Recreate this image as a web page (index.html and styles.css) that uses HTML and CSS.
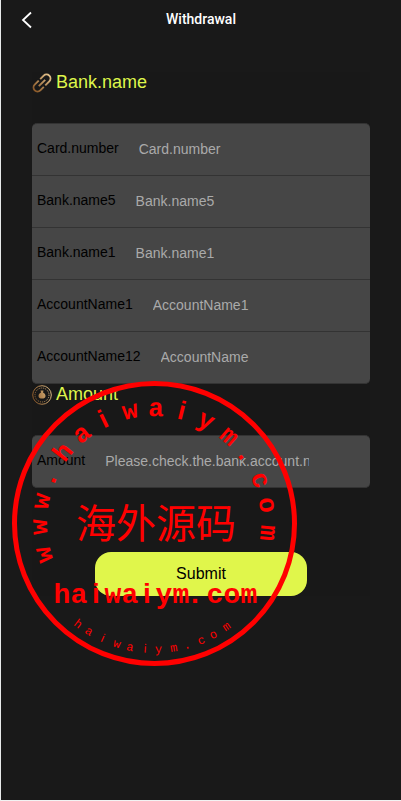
FILE: index.html
```html
<!DOCTYPE html>
<html lang="en">
<head>
<meta charset="utf-8">
<meta name="viewport" content="width=device-width, initial-scale=1">
<title>Withdrawal</title>
<link rel="stylesheet" href="styles.css">
</head>
<body>
<div class="page">
  <header class="bar">
    <button class="back" type="button" aria-label="Back">
      <svg width="12" height="18" viewBox="0 0 12 18"><path d="M10 1.500 2 9l8 7.500" fill="none" stroke="#fff" stroke-width="1.800"/></svg>
    </button>
    <h1 class="bar-title">Withdrawal</h1>
  </header>
  <form class="form">
    <h2 class="heading">
      <svg width="20" height="20" viewBox="0 0 20 20" aria-hidden="true">
        <defs><linearGradient id="copper" x1="0" y1="20" x2="20" y2="0" gradientUnits="userSpaceOnUse"><stop offset="0" stop-color="#7c4717"/><stop offset="1" stop-color="#efd09a"/></linearGradient></defs>
        <g fill="none" stroke="url(#copper)" stroke-width="1.900">
          <path d="M8.200 6.200 11.700 2.700a3.900 3.900 0 0 1 5.600 5.600L13.300 12.300"/>
          <path d="M11.800 13.800 8.300 17.300a3.900 3.900 0 0 1-5.600-5.600L6.700 7.700"/>
          <path d="M6.800 13.200 13.200 6.800"/>
        </g>
      </svg>
      <span>Bank.name</span>
    </h2>
    <div class="group">
      <div class="row"><label for="card">Card.number</label><input id="card" type="text" placeholder="Card.number"></div>
      <div class="row"><label for="bank5">Bank.name5</label><input id="bank5" type="text" placeholder="Bank.name5"></div>
      <div class="row"><label for="bank1">Bank.name1</label><input id="bank1" type="text" placeholder="Bank.name1"></div>
      <div class="row"><label for="account1">AccountName1</label><input id="account1" type="text" placeholder="AccountName1"></div>
      <div class="row"><label for="account12">AccountName12</label><input id="account12" type="text" placeholder="AccountName"></div>
    </div>
    <h2 class="heading">
      <svg width="20" height="20" viewBox="0 0 20 20" aria-hidden="true">
        <defs><linearGradient id="gold" x1="0" y1="12" x2="20" y2="6" gradientUnits="userSpaceOnUse"><stop offset="0" stop-color="#8a5524"/><stop offset="1" stop-color="#e6c58e"/></linearGradient></defs>
        <circle cx="10" cy="10" r="9.300" fill="#171717" stroke="url(#gold)" stroke-width="1"/>
        <circle cx="10" cy="10" r="7" fill="none" stroke="url(#gold)" stroke-width="1" stroke-dasharray="1 1"/>
        <path d="M8.500 5.500h3l-.5 2c1.800.8 2.500 2.300 2.500 3.500 0 2-1.500 2.500-3.500 2.500s-3.500-.5-3.500-2.500c0-1.200.7-2.700 2.500-3.500Z" fill="url(#gold)"/>
      </svg>
      <span>Amount</span>
    </h2>
    <div class="group">
      <div class="row"><label for="amount">Amount</label><input id="amount" type="text" placeholder="Please.check.the.bank.account.number"></div>
    </div>
    <button class="submit" type="button">Submit</button>
  </form>
  <svg class="stamp" viewBox="0 0 285 285">
    <circle class="ring" cx="142.500" cy="142.500" r="140"/>
    <g class="arc-top">
      <text x="142" y="35" transform="rotate(-106 142 142)">w</text>
      <text x="142" y="35" transform="rotate(-92 142 142)">w</text>
      <text x="142" y="35" transform="rotate(-79 142 142)">w</text>
      <text x="142" y="35" transform="rotate(-67 142 142)">.</text>
      <text x="142" y="35" transform="rotate(-52 142 142)">h</text>
      <text x="142" y="35" transform="rotate(-39 142 142)">a</text>
      <text class="plain" x="142" y="35" transform="rotate(-26 142 142)">i</text>
      <text x="142" y="35" transform="rotate(-12 142 142)">w</text>
      <text x="142" y="35" transform="rotate(1 142 142)">a</text>
      <text class="plain" x="142" y="35" transform="rotate(14 142 142)">i</text>
      <text x="142" y="35" transform="rotate(27 142 142)">y</text>
      <text x="142" y="35" transform="rotate(41 142 142)">m</text>
      <text x="142" y="35" transform="rotate(53 142 142)">.</text>
      <text x="142" y="35" transform="rotate(68 142 142)">c</text>
      <text x="142" y="35" transform="rotate(81 142 142)">o</text>
      <text x="142" y="35" transform="rotate(95 142 142)">m</text>
    </g>
    <text class="name" x="144" y="157">海外源码</text>
    <text class="site" y="222" x="50 67 84 101 118 135 152 169 183 203 220 237">ha<tspan class="plain">i</tspan>wa<tspan class="plain">i</tspan>ym.com</text>
    <g class="arc-bottom">
      <text x="142" y="272" transform="rotate(37 142 142)">h</text>
      <text x="142" y="272" transform="rotate(31 142 142)">a</text>
      <text class="plain" x="142" y="272" transform="rotate(24 142 142)">i</text>
      <text x="142" y="272" transform="rotate(17 142 142)">w</text>
      <text x="142" y="272" transform="rotate(11 142 142)">a</text>
      <text class="plain" x="142" y="272" transform="rotate(4 142 142)">i</text>
      <text x="142" y="272" transform="rotate(-2 142 142)">y</text>
      <text x="142" y="272" transform="rotate(-9 142 142)">m</text>
      <text x="142" y="272" transform="rotate(-15 142 142)">.</text>
      <text x="142" y="272" transform="rotate(-22 142 142)">c</text>
      <text x="142" y="272" transform="rotate(-28 142 142)">o</text>
      <text x="142" y="272" transform="rotate(-35 142 142)">m</text>
    </g>
  </svg>
</div>
</body>
</html>
```
FILE: styles.css
```css
* { box-sizing: border-box; }
body {
  margin: 0;
  background: #191919;
  font-family: "Liberation Sans", Arial, sans-serif;
}
.page {
  position: relative;
  min-height: 100vh;
  background: #191919;
  border-left: 1px solid #e8eaea;
  border-bottom: 1px solid #f2f2f2;
}
.bar {
  display: grid;
  grid-template-columns: 48px 1fr 48px;
  align-items: center;
  height: 40px;
}
.back {
  display: flex;
  align-items: center;
  height: 40px;
  padding: 0 20px;
  border: 0;
  background: none;
}
.back svg { flex: none; }
.bar-title {
  margin: 0;
  padding-bottom: 2px;
  font: 500 14px/20px Roboto, sans-serif;
  color: #fff;
  text-align: center;
}
.form {
  margin: 32px 31px 0;
  background: #181818;
}
.heading {
  display: flex;
  align-items: flex-start;
  gap: 4px;
  height: 51px;
  margin: 0;
  font-size: 18px;
  font-weight: 400;
  line-height: 20px;
  color: #dff64b;
}
.heading svg { margin-top: 1px; }
.group {
  border-top: 1px solid #333;
  border-radius: 5px;
  background: #464646;
}
.row {
  display: flex;
  align-items: center;
  gap: 20px;
  height: 52px;
  padding: 0 5px 2px;
  border-bottom: 1px solid #333;
  font-size: 14px;
  line-height: 20px;
  color: #000;
}
.row:last-child { border-radius: 0 0 5px 5px; }
.row label {
  flex: none;
  padding-bottom: 2px;
}
.row input {
  flex: 0 1 204px;
  min-width: 0;
  height: 24px;
  padding: 0;
  border: 0;
  outline: 0;
  background: none;
  font: inherit;
  color: #fff;
}
.row input::placeholder { color: #aaa; opacity: 1; }
.submit {
  display: block;
  width: 212px;
  height: 44px;
  margin: 64px auto 0;
  padding: 0;
  border: 0;
  border-radius: 16px;
  background: #e0f64b;
  font: 16px/20px "Liberation Sans", Arial, sans-serif;
  color: #000;
}
.stamp {
  position: absolute;
  left: 11px;
  top: 381px;
  width: 285px;
  height: 285px;
  pointer-events: none;
  fill: #f00;
  text-anchor: middle;
}
.ring {
  fill: none;
  stroke: #f00;
  stroke-width: 5;
}
.arc-top, .site {
  font-family: "Liberation Mono", monospace;
  font-size: 28px;
  font-weight: 700;
}
.arc-top { font-size: 26px; }
.arc-bottom {
  font-family: "Liberation Mono", monospace;
  font-size: 12px;
}
.name {
  font-family: "Noto Sans CJK SC", sans-serif;
  font-size: 40px;
}
.plain { font-family: "Liberation Sans", Arial, sans-serif; }
```
